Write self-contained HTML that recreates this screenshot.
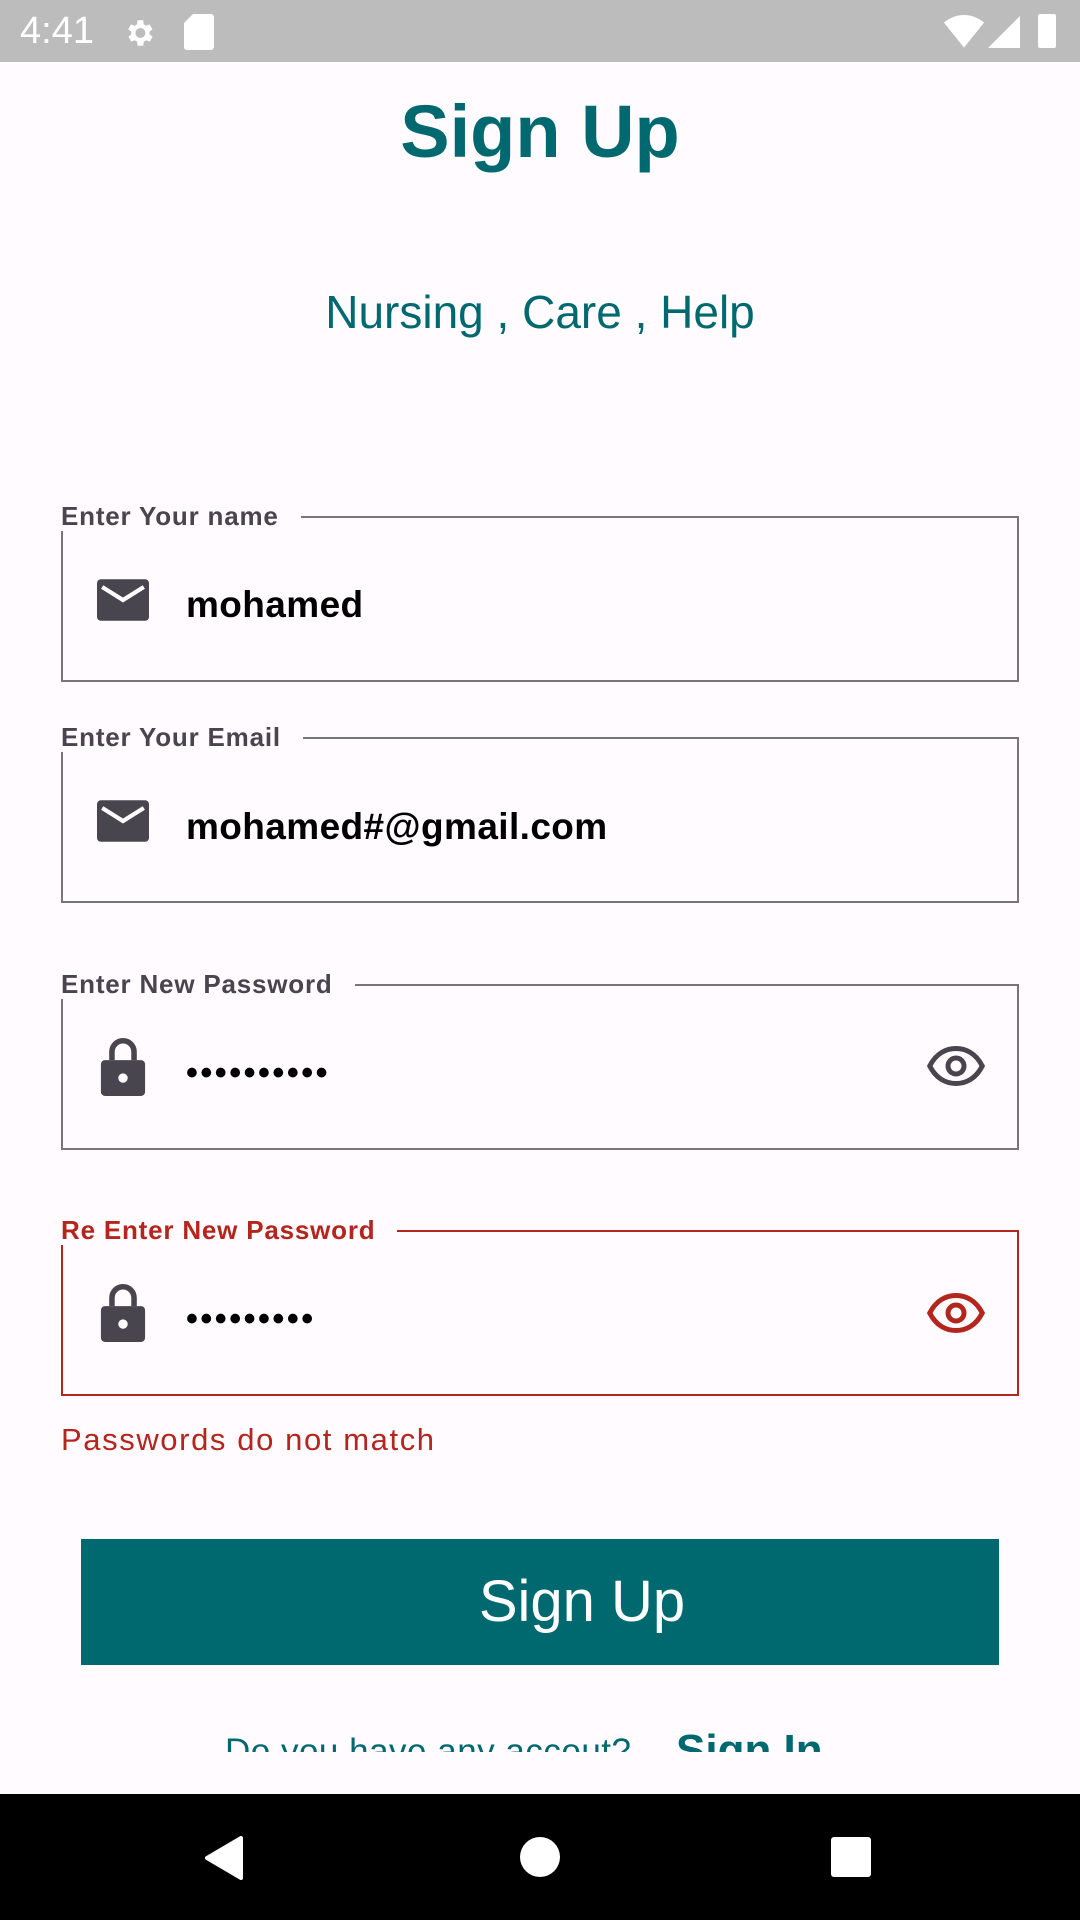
<!DOCTYPE html>
<html><head><meta charset="utf-8"><style>
*{margin:0;padding:0;box-sizing:border-box}
body{width:1080px;height:1920px;background:#fffbfe;font-family:"Liberation Sans",sans-serif;position:relative;overflow:hidden}
.abs{position:absolute}
.status{top:0;left:0;width:1080px;height:62px;background:#bdbcbd}
.title{top:89px;left:0;width:1080px;text-align:center;color:#006970;font-weight:bold;font-size:74px}
.sub{top:285px;left:0;width:1080px;text-align:center;color:#006970;font-size:46px}
.box{left:61px;width:958px;height:166px;border:2px solid #79747e}
.lbl{left:61px;font-size:26px;font-weight:bold;color:#49454f;background:#fffbfe;padding-right:22px;line-height:30px;letter-spacing:0.8px}
.val{left:186px;font-size:37px;font-weight:bold;color:#000;letter-spacing:0.4px}
.red{border-color:#b3261e}
</style></head><body>
<div class="abs status">
<div class="abs" style="left:20px;top:10px;color:#fff;font-size:38px">4:41</div>
<svg class="abs" style="left:122px;top:16px" width="34" height="34" viewBox="0 0 24 24"><path fill="#fff" d="M19.4 13a7.5 7.5 0 000-2l2.1-1.6-2-3.5-2.5 1a7 7 0 00-1.7-1L15 3h-4l-.4 2.9a7 7 0 00-1.7 1l-2.5-1-2 3.5L6.6 11a7.5 7.5 0 000 2l-2.1 1.6 2 3.5 2.5-1a7 7 0 001.7 1L11 21h4l.4-2.9a7 7 0 001.7-1l2.5 1 2-3.5zM13 15.5a3.5 3.5 0 110-7 3.5 3.5 0 010 7z"/></svg>
<svg class="abs" style="left:184px;top:14px" width="30" height="36" viewBox="0 0 20 24"><path fill="#fff" d="M6 0h12a2 2 0 012 2v20a2 2 0 01-2 2H2a2 2 0 01-2-2V6z"/></svg>
<svg class="abs" style="left:944px;top:14px" width="40" height="34" viewBox="0 0 24 20"><path fill="#fff" d="M0 5a18 18 0 0124 0L12 20z"/></svg>
<svg class="abs" style="left:988px;top:16px" width="32" height="32" viewBox="0 0 20 20"><path fill="#fff" d="M20 0v20H0z"/></svg>
<div class="abs" style="left:1038px;top:14px;width:18px;height:34px;background:#fff;border-radius:2px"></div>
</div>
<div class="abs title">Sign Up</div>
<div class="abs sub">Nursing , Care , Help</div>

<div class="abs box" style="top:516px"></div>
<div class="abs lbl" style="top:501px">Enter Your name</div>
<svg class="abs" style="left:97px;top:578px" width="52" height="44" viewBox="0 0 20 16"><rect width="20" height="16" rx="1.5" fill="#49454f"/><path d="M2 3l8 5 8-5" stroke="#fff" stroke-width="1.6" fill="none"/></svg>
<div class="abs val" style="top:584px">mohamed</div>

<div class="abs box" style="top:737px"></div>
<div class="abs lbl" style="top:722px">Enter Your Email</div>
<svg class="abs" style="left:97px;top:799px" width="52" height="44" viewBox="0 0 20 16"><rect width="20" height="16" rx="1.5" fill="#49454f"/><path d="M2 3l8 5 8-5" stroke="#fff" stroke-width="1.6" fill="none"/></svg>
<div class="abs val" style="top:806px">mohamed#@gmail.com</div>

<div class="abs box" style="top:984px"></div>
<div class="abs lbl" style="top:969px">Enter New Password</div>
<svg class="abs" style="left:100px;top:1038px" width="46" height="58" viewBox="0 0 16 21"><path d="M4 8V5a4 4 0 018 0v3" stroke="#49454f" stroke-width="2" fill="none"/><rect y="8" width="16" height="13" rx="1.5" fill="#49454f"/><circle cx="8" cy="14.5" r="1.7" fill="#fff"/></svg>
<div class="abs val" style="top:1054px;font-size:34px;letter-spacing:2.5px">••••••••••</div>
<svg class="abs" style="left:926px;top:1044px" width="60" height="44" viewBox="0 0 24 17"><path d="M1.5 8.5C4 3.5 8 1.5 12 1.5s8 2 10.5 7c-2.5 5-6.5 7-10.5 7s-8-2-10.5-7z" stroke="#49454f" stroke-width="2" fill="none"/><circle cx="12" cy="8.5" r="3.2" stroke="#49454f" stroke-width="2" fill="none"/></svg>

<div class="abs box red" style="top:1230px"></div>
<div class="abs lbl" style="top:1215px;color:#b3261e">Re Enter New Password</div>
<svg class="abs" style="left:100px;top:1284px" width="46" height="58" viewBox="0 0 16 21"><path d="M4 8V5a4 4 0 018 0v3" stroke="#49454f" stroke-width="2" fill="none"/><rect y="8" width="16" height="13" rx="1.5" fill="#49454f"/><circle cx="8" cy="14.5" r="1.7" fill="#fff"/></svg>
<div class="abs val" style="top:1300px;font-size:34px;letter-spacing:2.5px">•••••••••</div>
<svg class="abs" style="left:926px;top:1291px" width="60" height="44" viewBox="0 0 24 17"><path d="M1.5 8.5C4 3.5 8 1.5 12 1.5s8 2 10.5 7c-2.5 5-6.5 7-10.5 7s-8-2-10.5-7z" stroke="#b3261e" stroke-width="2" fill="none"/><circle cx="12" cy="8.5" r="3.2" stroke="#b3261e" stroke-width="2" fill="none"/></svg>
<div class="abs" style="left:61px;top:1422px;font-size:31px;color:#b3261e;letter-spacing:1.6px">Passwords do not match</div>

<div class="abs" style="left:81px;top:1539px;width:918px;height:126px;background:#006970;color:#fff;font-size:58px;text-align:center;line-height:126px;padding-left:84px">Sign Up</div>

<div class="abs" style="left:0;top:1700px;width:1080px;height:52px;overflow:hidden">
<div class="abs" style="left:225px;top:32px;font-size:35px;color:#006970;letter-spacing:0.5px">Do you have any accout?</div>
<div class="abs" style="left:676px;top:26px;font-size:44px;font-weight:bold;color:#006970">Sign In</div>
</div>

<div class="abs" style="left:0;top:1794px;width:1080px;height:126px;background:#000">
<svg class="abs" style="left:205px;top:42px" width="40" height="44" viewBox="0 0 20 22"><path d="M18 1v20L1 11z" fill="#fff" stroke="#fff" stroke-linejoin="round" stroke-width="2"/></svg>
<div class="abs" style="left:520px;top:43px;width:40px;height:40px;border-radius:50%;background:#fff"></div>
<div class="abs" style="left:831px;top:43px;width:40px;height:40px;border-radius:3px;background:#fff"></div>
</div>
</body></html>
